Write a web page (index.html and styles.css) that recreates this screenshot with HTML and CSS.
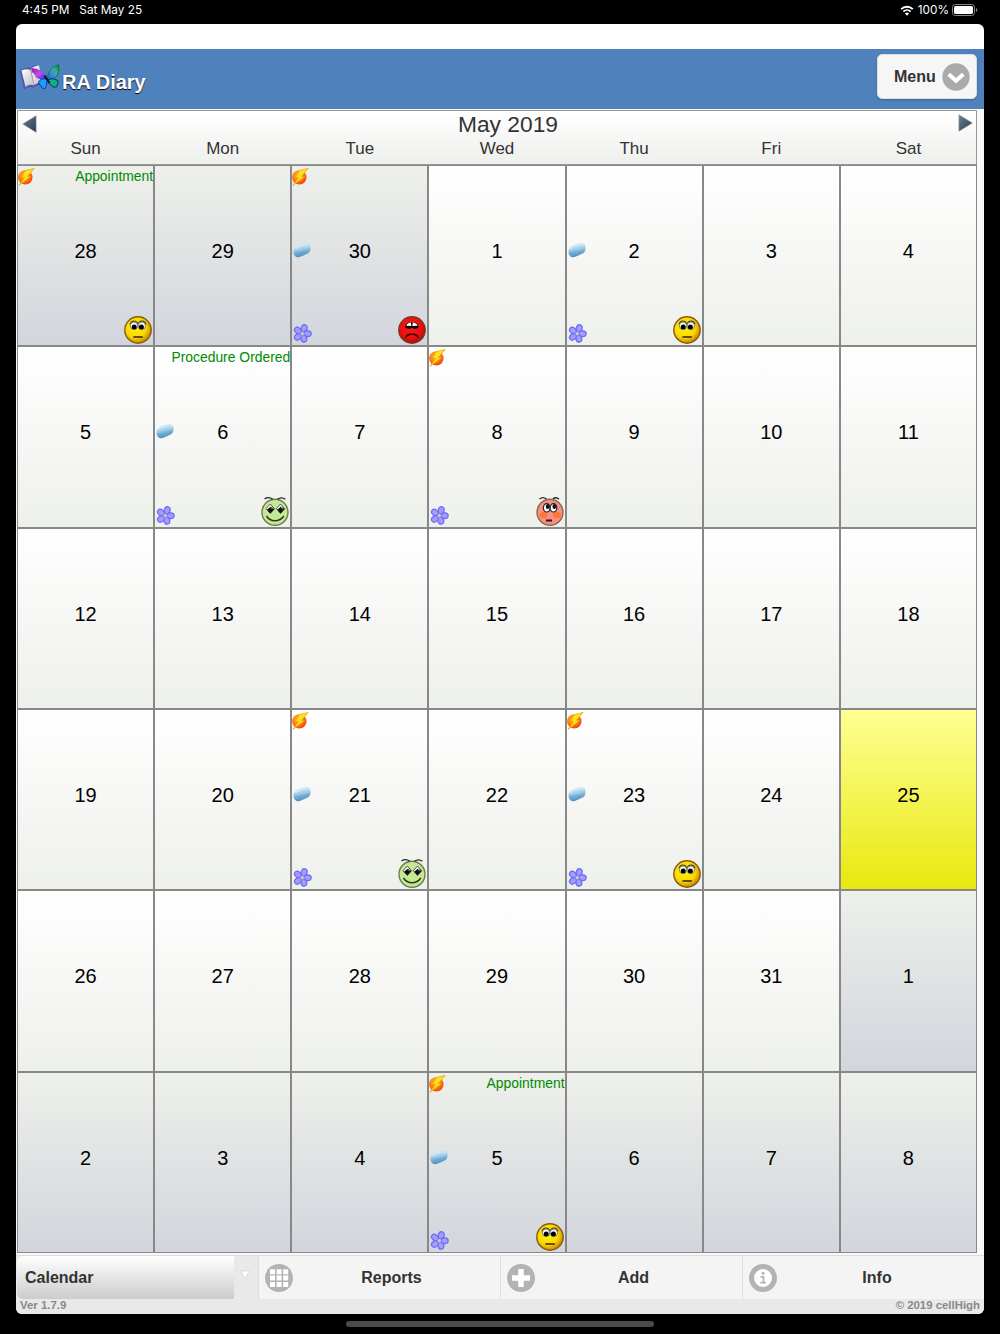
FILE: index.html
```html
<!DOCTYPE html>
<html lang="en">
<head>
  <meta charset="UTF-8">
  <meta name="viewport" content="width=device-width, initial-scale=1.0">
  <title>RA Diary</title>
  <link rel="stylesheet" href="styles.css">
</head>
<body>
  <!-- Icon definitions -->
  <svg class="defs" width="0" height="0">
    <defs>
      <radialGradient id="gFlare" cx=".4" cy=".35" r=".7">
        <stop offset="0" stop-color="#ffb52e"/><stop offset=".55" stop-color="#ff7a1a"/><stop offset="1" stop-color="#f03c08"/>
      </radialGradient>
      <linearGradient id="gPill" x1=".35" y1="0" x2=".6" y2="1">
        <stop offset="0" stop-color="#d8ecf5"/><stop offset=".45" stop-color="#9ccbe6"/><stop offset=".6" stop-color="#72afd8"/><stop offset="1" stop-color="#4a8cc0"/>
      </linearGradient>
      <radialGradient id="gYellow" cx=".42" cy=".4" r=".6">
        <stop offset="0" stop-color="#fff700"/><stop offset=".65" stop-color="#fbd800"/><stop offset="1" stop-color="#c88a08"/>
      </radialGradient>
      <radialGradient id="gRed" cx=".45" cy=".4" r=".6">
        <stop offset="0" stop-color="#f81c1c"/><stop offset=".7" stop-color="#ea1010"/><stop offset="1" stop-color="#a80c0c"/>
      </radialGradient>
      <linearGradient id="gArrow" x1="0" y1="0" x2="1" y2="1">
        <stop offset="0" stop-color="#6d8296"/><stop offset="1" stop-color="#26384c"/>
      </linearGradient>
      <linearGradient id="gBook" x1="0" y1="0" x2="1" y2="1">
        <stop offset="0" stop-color="#fff"/><stop offset="1" stop-color="#bdbdbd"/>
      </linearGradient>
      <linearGradient id="gWingL" x1="0" y1="0" x2="1" y2="1">
        <stop offset="0" stop-color="#9a12b8"/><stop offset=".5" stop-color="#c44bea"/><stop offset="1" stop-color="#1b2ad0"/>
      </linearGradient>
      <linearGradient id="gWingR" x1="1" y1="0" x2="0" y2="1">
        <stop offset="0" stop-color="#067a3a"/><stop offset=".4" stop-color="#14c8a0"/><stop offset="1" stop-color="#1560d8"/>
      </linearGradient>
    </defs>

    <symbol id="flare" viewBox="0 0 17 18">
      <circle cx="7.3" cy="9.4" r="7.2" fill="url(#gFlare)"/>
      <path d="M16.2.4 7.2 2.6 3.4 9.6 6.6 9.4 1 17.4 12.6 8.6 9.4 8.4Z" fill="#ffe21a" stroke="#e8a30c" stroke-width=".7"/>
    </symbol>

    <symbol id="pill" viewBox="0 0 18 17">
      <path d="M.6 8C1.200 5.200 3.600 3.900 6.400 2.900 9.600 1.700 13.600.300 16 2c1.800 1.400 1.900 4.400 1.200 6.400-.8 2.600-3 3.400-5.200 4.300-2.600 1.200-5.800 3.200-8.600 2.200C.9 13.800 0 10.800.6 8Z" fill="url(#gPill)"/>
      <path d="M2.400 7C5 4.400 12 1.800 16 3.600" fill="none" stroke="#e4f3fa" stroke-width="1.200" opacity=".6"/>
    </symbol>

    <symbol id="flower" viewBox="0 0 19 19">
      <g fill="#a19dff" stroke="#6d6af4" stroke-width="1.200">
        <ellipse cx="11.200" cy="4.300" rx="2.900" ry="3.600" transform="rotate(18 11.200 4.300)"/>
        <ellipse cx="14.600" cy="9.700" rx="2.900" ry="3.600" transform="rotate(92 14.600 9.700)"/>
        <ellipse cx="10.800" cy="14.600" rx="2.900" ry="3.600" transform="rotate(162 10.800 14.600)"/>
        <ellipse cx="4.900" cy="12.900" rx="2.900" ry="3.600" transform="rotate(230 4.900 12.900)"/>
        <ellipse cx="4.900" cy="6.500" rx="2.900" ry="3.600" transform="rotate(308 4.900 6.500)"/>
      </g>
      <circle cx="9.300" cy="9.700" r="2.500" fill="#8a87fa"/>
      <circle cx="9.300" cy="9.700" r="1.400" fill="#e8d090"/>
    </symbol>

    <symbol id="face-ok" viewBox="0 0 28 30">
      <circle cx="14" cy="16" r="13.200" fill="url(#gYellow)" stroke="#8a5c12" stroke-width="1.400"/>
      <path d="M6 10.500Q7 6.800 10 7q3 0 4 3.400 1-3.400 4-3.400 3.200 0 4 3.500" fill="none" stroke="#333" stroke-width="1.200"/>
      <circle cx="10" cy="11.800" r="3.700" fill="#fff" stroke="#555" stroke-width=".7"/>
      <circle cx="17.800" cy="11.800" r="3.700" fill="#fff" stroke="#555" stroke-width=".7"/>
      <circle cx="10.200" cy="13.100" r="2.500" fill="#000"/>
      <circle cx="17.400" cy="13.100" r="2.500" fill="#000"/>
      <path d="M9.400 23h9.400" stroke="#6a4a00" stroke-width="2"/>
    </symbol>

    <symbol id="face-bad" viewBox="0 0 28 30">
      <circle cx="14" cy="16" r="13.200" fill="url(#gRed)" stroke="#7c3a1c" stroke-width="1.400"/>
      <path d="M7 14c0-3 2-5.500 5-6l1.800 1L15.500 8c3 .5 5 3 5 6l-4.500 1-2-1.400L12 15Z" fill="#120404"/>
      <path d="M8.300 11.800q1-3 4.500-3.200l.6 3.400Z M19.400 11.800q-1-3-4.500-3.200l-.6 3.400Z" fill="#fff"/>
      <path d="M7.800 23.800q1.400-3.600 6.200-3.600t6.200 3.600" fill="none" stroke="#400" stroke-width="1.700"/>
    </symbol>

    <symbol id="face-good" viewBox="0 0 28 30">
      <circle cx="14" cy="16.300" r="13" fill="#c5e896" stroke="#6c7c4c" stroke-width="1.400"/>
      <path d="M3.500 3q4-2.800 8.300.2M16.400 3.200q4-2.800 8 0" fill="none" stroke="#222" stroke-width="1.300"/>
      <path d="m9.300 8 4.200 4.800-4.200 4.600L5 12.800Z M19.500 8l4.300 4.800-4.300 4.600-4.200-4.600Z" fill="#fff" stroke="#333" stroke-width=".8"/>
      <path d="m9.800 10.500 3.600 2.400-4.100 4.600-3.300-3.700Z M20 10.500l3.600 2.400-4.100 4.600-3.300-3.700Z" fill="#111"/>
      <path d="M10 11.500l1.200 1.200M20.200 11.500l1.200 1.200" stroke="#fff" stroke-width="1"/>
      <path d="M5.500 20q3 4.800 8.500 4.800t8.800-4.800" fill="none" stroke="#2c3a18" stroke-width="1.500"/>
    </symbol>

    <symbol id="face-flush" viewBox="0 0 28 30">
      <circle cx="14" cy="16.300" r="13" fill="#f58e84" stroke="#8a6a48" stroke-width="1.400"/>
      <path d="M3.500 3q3.500-2.800 7 0M17 2.600q3.400-2 6 .6" fill="none" stroke="#222" stroke-width="1.300"/>
      <ellipse cx="7.500" cy="19" rx="3.800" ry="3" fill="#ff7420" opacity=".85"/>
      <ellipse cx="21" cy="19" rx="3.800" ry="3" fill="#ff7420" opacity=".85"/>
      <ellipse cx="10.700" cy="11.800" rx="3.300" ry="4.200" fill="#fff" stroke="#222" stroke-width="1.200"/>
      <ellipse cx="17.500" cy="11.800" rx="3.300" ry="4.200" fill="#fff" stroke="#222" stroke-width="1.200"/>
      <ellipse cx="11.600" cy="10.500" rx="1.800" ry="2.600" fill="#111"/>
      <ellipse cx="18.300" cy="10.500" rx="1.800" ry="2.600" fill="#111"/>
      <path d="M10 24.500h6" stroke="#3a1010" stroke-width="2"/>
    </symbol>
  </svg>

  <!-- Status bar -->
  <div class="status">
    <span class="time">4:45 PM</span>
    <span>Sat May 25</span>
    <svg class="wifi" width="14" height="11" viewBox="0 0 14 11">
      <path d="M1.200 4.200a8.200 8.200 0 0 1 11.600 0M3.400 6.600a5.100 5.100 0 0 1 7.200 0" fill="none" stroke="#fff" stroke-width="1.900"/>
      <path d="M7 10.800 4.900 8.500a3 3 0 0 1 4.200 0Z" fill="#fff"/>
    </svg>
    <span>100%</span>
    <svg class="battery" width="26" height="12" viewBox="0 0 26 12">
      <rect x=".5" y=".5" width="22" height="11" rx="3" fill="none" stroke="#888"/>
      <rect x="2" y="2" width="19" height="8" rx="1.800" fill="#fff"/>
      <path d="M24 4v4q1.300-.6 1.300-2T24 4Z" fill="#888"/>
    </svg>
  </div>

  <div class="window">
    <!-- Header -->
    <header class="header">
      <svg class="logo" width="40" height="27" viewBox="0 0 40 27">
        <path d="M0 6.500 4 25.500q5-3.500 9-2l8-3.500L18.500 1q-5-.5-8 3-5-1.500-10.500 2.500Z" fill="#5a43b0" opacity=".8"/>
        <path d="M1.500 6.500q5-2 9-.5L14 21.500q-4.500-2-8.500 1.500Z" fill="url(#gBook)"/>
        <path d="M11 5q3.500-3.500 8-3.500L22 17l-8 4Z" fill="url(#gBook)"/>
        <path d="m10.500 6 3.500 15" stroke="#aaa" stroke-width=".8"/>
        <path d="M26.500 14Q22 4 11.500 4q-.5 4.500 3 6.500 1 4 5.500 4.500l5.500.5Z" fill="url(#gWingL)"/>
        <path d="M26 15q-6-1-7.500 3.500 1 3 2.500 3 .5 3.500 3.500 3.500 3-3 2.500-9Z" fill="#18a4ec" stroke="#1b2cc8" stroke-width="1"/>
        <path d="M27 14Q29 4 38.500.5q1.500 5-.5 8.500-1 5-5 5.500l-5.500 1Z" fill="url(#gWingR)" stroke="#0a6a30" stroke-width=".7"/>
        <path d="M30.500 12q1.500-5 5.500-7-.5 6-5.500 7Z" fill="#a35cf0"/>
        <path d="M27.500 15.500q6-2 10.500 1 .5 3.500-1.500 6.500-2.500 1-4.500-1-3.500-2-4.500-6.500Z" fill="#14b07c" stroke="#0c2a90" stroke-width="1"/>
        <path d="M24.500 11.500 29.500 19" stroke="#101428" stroke-width="2"/>
      </svg>
      <h1>RA Diary</h1>
      <button class="menu">Menu
        <svg width="28" height="28" viewBox="0 0 28 28">
          <circle cx="14" cy="14" r="13.700" fill="#aaa"/>
          <path d="m6.700 11.300 7.300 6.500 7.300-6.500" fill="none" stroke="#fff" stroke-width="4"/>
        </svg>
      </button>
    </header>

    <!-- Calendar -->
    <main class="calendar">
      <div class="cal-head">
        <div class="month">
          <svg width="15" height="18" viewBox="0 0 15 18"><path d="M.500 9 14.200.6v16.800Z" fill="url(#gArrow)" stroke="#aab4be" stroke-width=".5"/></svg>
          <h2>May 2019</h2>
          <svg class="next" width="15" height="18" viewBox="0 0 15 18"><path d="M14.500 9 .8.600v16.800Z" fill="url(#gArrow)" stroke="#aab4be" stroke-width=".5"/></svg>
        </div>
        <div class="weekdays">
          <span>Sun</span><span>Mon</span><span>Tue</span><span>Wed</span><span>Thu</span><span>Fri</span><span>Sat</span>
        </div>
      </div>

      <div class="days">
        <div class="day other">28
          <svg class="flare"><use href="#flare"/></svg>
          <span class="event">Appointment</span>
          <svg class="face"><use href="#face-ok"/></svg>
        </div>
        <div class="day other">29</div>
        <div class="day other">30
          <svg class="flare"><use href="#flare"/></svg>
          <svg class="pill"><use href="#pill"/></svg>
          <svg class="flower"><use href="#flower"/></svg>
          <svg class="face"><use href="#face-bad"/></svg>
        </div>
        <div class="day">1</div>
        <div class="day">2
          <svg class="pill"><use href="#pill"/></svg>
          <svg class="flower"><use href="#flower"/></svg>
          <svg class="face"><use href="#face-ok"/></svg>
        </div>
        <div class="day">3</div>
        <div class="day">4</div>

        <div class="day">5</div>
        <div class="day">6
          <span class="event">Procedure Ordered</span>
          <svg class="pill"><use href="#pill"/></svg>
          <svg class="flower"><use href="#flower"/></svg>
          <svg class="face"><use href="#face-good"/></svg>
        </div>
        <div class="day">7</div>
        <div class="day">8
          <svg class="flare"><use href="#flare"/></svg>
          <svg class="flower"><use href="#flower"/></svg>
          <svg class="face"><use href="#face-flush"/></svg>
        </div>
        <div class="day">9</div>
        <div class="day">10</div>
        <div class="day">11</div>

        <div class="day">12</div>
        <div class="day">13</div>
        <div class="day">14</div>
        <div class="day">15</div>
        <div class="day">16</div>
        <div class="day">17</div>
        <div class="day">18</div>

        <div class="day">19</div>
        <div class="day">20</div>
        <div class="day">21
          <svg class="flare"><use href="#flare"/></svg>
          <svg class="pill"><use href="#pill"/></svg>
          <svg class="flower"><use href="#flower"/></svg>
          <svg class="face"><use href="#face-good"/></svg>
        </div>
        <div class="day">22</div>
        <div class="day">23
          <svg class="flare"><use href="#flare"/></svg>
          <svg class="pill"><use href="#pill"/></svg>
          <svg class="flower"><use href="#flower"/></svg>
          <svg class="face"><use href="#face-ok"/></svg>
        </div>
        <div class="day">24</div>
        <div class="day today">25</div>

        <div class="day">26</div>
        <div class="day">27</div>
        <div class="day">28</div>
        <div class="day">29</div>
        <div class="day">30</div>
        <div class="day">31</div>
        <div class="day other">1</div>

        <div class="day other">2</div>
        <div class="day other">3</div>
        <div class="day other">4</div>
        <div class="day other">5
          <svg class="flare"><use href="#flare"/></svg>
          <span class="event">Appointment</span>
          <svg class="pill"><use href="#pill"/></svg>
          <svg class="flower"><use href="#flower"/></svg>
          <svg class="face"><use href="#face-ok"/></svg>
        </div>
        <div class="day other">6</div>
        <div class="day other">7</div>
        <div class="day other">8</div>
      </div>
    </main>

    <!-- Bottom navigation -->
    <nav class="nav">
      <div class="select">
        <span>Calendar</span>
        <svg width="10" height="10" viewBox="0 0 10 10"><path d="M.800 1h8.400L5 9Z" fill="#fff" stroke="#ccc" stroke-width=".6"/></svg>
      </div>
      <a class="nav-item">
        <svg width="28" height="28" viewBox="0 0 28 28">
          <circle cx="14" cy="14" r="14" fill="#b3b3b3"/>
          <path d="M5 5.200h5v5H5zM11.600 5.200h5v5h-5zM18.200 5.200h5v5h-5zM5 11.600h5v5H5zM11.600 11.600h5v5h-5zM18.200 11.600h5v5h-5zM5 18h5v5H5zM11.600 18h5v5h-5zM18.200 18h5v5h-5z" fill="#fff"/>
        </svg>
        <span>Reports</span>
      </a>
      <a class="nav-item">
        <svg width="28" height="28" viewBox="0 0 28 28">
          <circle cx="14" cy="14" r="14" fill="#b3b3b3"/>
          <path d="M14 5v18M5 14h18" stroke="#fff" stroke-width="5.500"/>
        </svg>
        <span>Add</span>
      </a>
      <a class="nav-item">
        <svg width="28" height="28" viewBox="0 0 28 28">
          <circle cx="14" cy="14" r="11.500" fill="#fff" stroke="#b3b3b3" stroke-width="5"/>
          <circle cx="14" cy="9.300" r="1.500" fill="#b3b3b3"/>
          <path d="M11.500 12.800h3V18.500M11.300 18.600h5.600" fill="none" stroke="#b3b3b3" stroke-width="1.700"/>
        </svg>
        <span class="wide">Info</span>
      </a>
    </nav>
    <footer class="footer">
      <span>Ver 1.7.9</span>
      <span>© 2019 cellHigh</span>
    </footer>
  </div>

  <div class="home-bar"></div>
</body>
</html>
```
FILE: styles.css
```css
* {
  box-sizing: border-box;
}

body {
  margin: 0;
  width: 1000px;
  height: 1334px;
  overflow: hidden;
  background: #000;
  font-family: "Liberation Sans", Arial, sans-serif;
  color: #333;
}

svg {
  display: block;
}

.defs {
  position: absolute;
}

/* Status bar */
.status {
  display: flex;
  align-items: center;
  height: 24px;
  padding: 0 22px 4px 22px;
  font-family: Inter, sans-serif;
  font-size: 11.8px;
  color: #fff;
}

.time {
  margin-right: 10px;
}

.wifi {
  margin: 0 4px 0 auto;
}

.battery {
  margin-left: 3px;
}

.window {
  display: flex;
  flex-direction: column;
  width: 968px;
  height: 1290px;
  margin: 0 auto;
  padding-top: 25px;
  border-radius: 6px;
  overflow: hidden;
  background: #f9f9f9 linear-gradient(#fff, #fff) no-repeat 0 0 / 100% 25px;
}

/* Header */
.header {
  display: flex;
  align-items: center;
  height: 60px;
  padding: 0 7px 0 4px;
  background: #4f81bc;
}

.logo {
  margin-bottom: 4px;
}

h1 {
  margin: 6px 0 0 2px;
  font-size: 20px;
  line-height: 24px;
  color: #fff;
  text-shadow: 0 1px 1px #000;
}

.menu {
  display: flex;
  align-items: center;
  justify-content: space-between;
  width: 100px;
  height: 45px;
  margin: 0 0 5px auto;
  padding: 0 6px 0 16px;
  border: 1px solid #ddd;
  border-radius: 5px;
  background: #f6f6f6;
  box-shadow: 0 1px 2px rgba(0, 0, 0, 0.2);
  font: bold 16px "Liberation Sans", Arial, sans-serif;
  color: #333;
}

/* Calendar */
.calendar {
  width: 960px;
  margin: 1px 0 0 1px;
}

.cal-head {
  height: 55px;
  border: 1px solid #999;
  background: linear-gradient(#fff, #eef0ec);
}

.month {
  display: flex;
  justify-content: space-between;
  height: 27px;
  padding: 4px 3px 0 4px;
}

.month .next {
  margin-top: -1px;
}

h2 {
  margin: -4px 0 0;
  padding-left: 21px;
  font-size: 22.8px;
  font-weight: normal;
  line-height: 26px;
}

.weekdays {
  display: grid;
  grid-template-columns: repeat(7, 1fr);
  margin: 0 -1px;
  text-align: center;
  font-size: 17px;
  line-height: 22px;
}

.days {
  display: grid;
  grid-template-columns: repeat(7, 1fr);
  grid-template-rows: repeat(6, 1fr);
  height: 1088px;
}

.day {
  position: relative;
  display: flex;
  align-items: center;
  justify-content: center;
  padding-bottom: 8px;
  border: 1px solid #888;
  background: linear-gradient(#fff, #eef0eb);
  font-size: 20px;
  color: #000;
}

.day.other {
  background: linear-gradient(#eef0eb, #d2d5dc);
}

.day.today {
  background: linear-gradient(#ffff94, #e8e80f);
}

/* Markers laid over a day */
.event {
  position: absolute;
  top: 2px;
  right: 0;
  font-size: 13.9px;
  line-height: 17px;
  white-space: nowrap;
  color: #008a00;
}

.flare,
.pill,
.flower,
.face {
  position: absolute;
}

.flare {
  top: 2px;
  left: 0;
  width: 17px;
  height: 18px;
}

.pill {
  top: 76px;
  left: 1px;
  width: 18px;
  height: 17px;
}

.flower {
  bottom: 2px;
  left: 1px;
  width: 19px;
  height: 19px;
}

.face {
  right: 1px;
  bottom: 1px;
  width: 28px;
  height: 30px;
}

/* Bottom navigation */
.nav {
  display: grid;
  grid-template-columns: repeat(4, 1fr);
  height: 44px;
  margin-top: 2px;
  border-top: 1px solid #ddd;
  background: #f4f4f4;
  font-size: 16px;
  font-weight: bold;
}

.select {
  display: flex;
  align-items: center;
  background: #e9e9e9;
}

.select span {
  width: 217px;
  margin-left: 1px;
  padding-left: 8px;
  border-radius: 6px 0 0 6px;
  background: linear-gradient(#fff, #ccc);
  line-height: 43px;
}

.select svg {
  margin: 0 0 5px 6px;
}

.nav-item {
  display: flex;
  align-items: center;
  padding-left: 6px;
  border-left: 1px solid #ddd;
}

.nav-item span {
  flex: 1;
  padding-right: 10px;
  text-align: center;
}

.nav-item .wide {
  padding-right: 7px;
}

.footer {
  display: flex;
  flex: 1;
  justify-content: space-between;
  padding: 0 4px;
  background: #e9e9e9;
  font-size: 11.4px;
  font-weight: bold;
  line-height: 13px;
  color: #888;
}

.home-bar {
  width: 308px;
  height: 6px;
  margin: 7px auto 0;
  border-radius: 3px;
  background: #4a4a4a;
}
```
